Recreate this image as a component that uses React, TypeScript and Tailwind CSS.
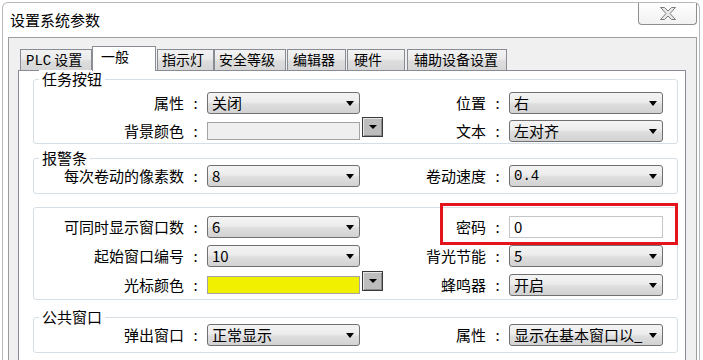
import type { ReactNode } from "react";

const rowGrid = "grid grid-cols-[150px_23px_153px_25px_101px_23px_154px] items-start";

function Dropdown({ value, mono = false }: { value: string; mono?: boolean }) {
  return (
    <div className="flex h-[22px] items-center justify-between rounded-[3px] border border-[#707070] bg-[linear-gradient(180deg,#f4f4f4_0%,#ececec_45%,#dedede_55%,#d2d2d2_100%)] pl-[4px] pr-[5px]">
      <span
        className={
          mono
            ? "whitespace-nowrap font-['Liberation_Mono',monospace] text-[14px] leading-[20px]"
            : "whitespace-nowrap text-[15px] leading-[20px]"
        }
      >
        {value}
      </span>
      <span className="h-0 w-0 border-x-[4px] border-t-[5px] border-x-transparent border-t-black" />
    </div>
  );
}

function TextBox({ value }: { value: string }) {
  return (
    <div className="flex h-[22px] items-center border border-[#c3c5c9] bg-white pl-[4px]">
      <span className="text-[15px] leading-[20px]">{value}</span>
    </div>
  );
}

function ColorBox({ color }: { color: string }) {
  return <div className={"mt-[2px] h-[18px] border border-[#a3a3a3] " + color} />;
}

function ColorButton() {
  return (
    <div className="-mt-[3px] ml-[2px] flex h-[20px] w-[21px] items-center justify-center border border-[#3a3a3a] bg-[#bdbdbd] shadow-[inset_1px_1px_0_#e6e6e6,inset_-1px_-1px_0_#8a8a8a]">
      <span className="h-0 w-0 border-x-[4px] border-t-[4px] border-x-transparent border-t-black" />
    </div>
  );
}

interface RowProps {
  label: string;
  field: ReactNode;
  extra?: ReactNode;
  label2?: string;
  field2?: ReactNode;
}

function Row({ label, field, extra, label2, field2 }: RowProps) {
  return (
    <div className={rowGrid + " h-[22px]"}>
      <span className="text-right text-[15px] leading-[22px]">{label}</span>
      <span className="text-center text-[15px] leading-[22px]">:</span>
      {field}
      <div className="flex">{extra}</div>
      <span className="text-right text-[15px] leading-[22px]">{label2}</span>
      <span className="text-center text-[15px] leading-[22px]">{label2 ? ":" : ""}</span>
      {field2 ?? <div />}
    </div>
  );
}

function Group({
  title,
  className,
  children,
}: {
  title?: string;
  className: string;
  children: ReactNode;
}) {
  return (
    <div className={"relative ml-[14px] mr-[7px] rounded-[3px] border border-[#d5dfe5] " + className}>
      {title ? (
        <span className="absolute -top-[10px] left-[5px] bg-white px-[3px] text-[15px] leading-[18px]">
          {title}
        </span>
      ) : null}
      {children}
    </div>
  );
}

const tabs = [
  { id: "plc", label: "设置", w: "w-[72px]", pl: "pl-[5px]", ml: "" },
  { id: "general", label: "一般", w: "w-[64px]", pl: "pl-[8px]", ml: "" },
  { id: "lamp", label: "指示灯", w: "w-[57px]", pl: "pl-[4px]", ml: "ml-[1px]" },
  { id: "security", label: "安全等级", w: "w-[72px]", pl: "pl-[4px]", ml: "" },
  { id: "editor", label: "编辑器", w: "w-[59px]", pl: "pl-[5px]", ml: "ml-[1px]" },
  { id: "hardware", label: "硬件", w: "w-[58px]", pl: "pl-[6px]", ml: "ml-[1px]" },
  { id: "aux", label: "辅助设备设置", w: "w-[100px]", pl: "pl-[6px]", ml: "ml-[2px]" },
];

function TabStrip() {
  return (
    <div className="flex items-end pl-[11px] pt-[8px]">
      {tabs.map((tab) =>
        tab.id === "general" ? (
          <div
            key={tab.id}
            className={
              "relative z-10 -mb-px h-[25px] border-x border-t border-[#898c95] bg-white text-[14px] leading-[19px] " +
              tab.w +
              " " +
              tab.pl
            }
          >
            {tab.label}
          </div>
        ) : (
          <div
            key={tab.id}
            className={
              "h-[21px] whitespace-nowrap border-x border-t border-[#898c95] bg-[linear-gradient(180deg,#f2f2f2_0%,#ebebeb_45%,#dddddd_55%,#d6d6d6_100%)] text-[14px] leading-[19px] " +
              tab.w +
              " " +
              tab.pl +
              " " +
              tab.ml
            }
          >
            {tab.id === "plc" ? (
              <>
                <span className="font-['Liberation_Mono',monospace]">PLC</span> {tab.label}
              </>
            ) : (
              tab.label
            )}
          </div>
        ),
      )}
    </div>
  );
}

function CloseButton() {
  return (
    <div className="mr-[2px] flex h-[22px] w-[59px] items-center justify-center rounded-b-[4px] border-x border-b border-[#8e8e8e] bg-[linear-gradient(180deg,#ffffff_0%,#f1f1f1_100%)]">
      <svg width="16" height="13" viewBox="0 0 16 13" aria-hidden="true">
        <polygon
          points="0.5,0.5 4.5,0.5 8,4 11.5,0.5 15.5,0.5 10,6.5 15.5,12.5 11.5,12.5 8,9 4.5,12.5 0.5,12.5 6,6.5"
          fill="#e9e9e9"
          stroke="#7a7a7a"
          strokeWidth="1"
          strokeLinejoin="round"
        />
      </svg>
    </div>
  );
}

export default function App() {
  return (
    <div className="h-[360px] w-[703px] overflow-hidden bg-white font-['Noto_Sans_CJK_SC',sans-serif] text-black">
      <div className="ml-[2px] mr-[3px] mt-[2px] rounded-t-[6px] border-x border-t border-[#b8b8b8] bg-white">
        <div className="flex h-[34px] items-start justify-between">
          <div className="pl-[7px] pt-[7px] text-[15px] leading-[20px]">设置系统参数</div>
          <CloseButton />
        </div>

        <div className="ml-[5px] mr-[2px] border-x border-t border-[#9d9d9d] bg-[#f0f0f0] pb-[20px]">
          <TabStrip />

          <div className="ml-[9px] mr-[10px] border border-[#898c95] bg-white pb-[20px] pt-[8px]">
            <Group title="任务按钮" className="flex flex-col gap-[6px] pb-[1px] pt-[12px]">
              <Row
                label="属性"
                field={<Dropdown value="关闭" />}
                label2="位置"
                field2={<Dropdown value="右" />}
              />
              <Row
                label="背景颜色"
                field={<ColorBox color="bg-[#efefef]" />}
                extra={<ColorButton />}
                label2="文本"
                field2={<Dropdown value="左对齐" />}
              />
            </Group>

            <Group title="报警条" className="mt-[14px] pb-[6px] pt-[6px]">
              <Row
                label="每次卷动的像素数"
                field={<Dropdown value="8" />}
                label2="卷动速度"
                field2={<Dropdown value="0.4" mono />}
              />
            </Group>

            <Group className="mt-[13px] flex flex-col gap-[7px] pb-[3px] pt-[8px]">
              <Row
                label="可同时显示窗口数"
                field={<Dropdown value="6" />}
                label2="密码"
                field2={<TextBox value="0" />}
              />
              <Row
                label="起始窗口编号"
                field={<Dropdown value="10" />}
                label2="背光节能"
                field2={<Dropdown value="5" />}
              />
              <Row
                label="光标颜色"
                field={<ColorBox color="bg-[#f0f000]" />}
                extra={<ColorButton />}
                label2="蜂鸣器"
                field2={<Dropdown value="开启" />}
              />
              <div className="pointer-events-none absolute -top-[5px] left-[406px] h-[42px] w-[238px] border-[3px] border-[#e3141c]" />
            </Group>

            <Group title="公共窗口" className="mt-[17px] pb-[6px] pt-[6px]">
              <Row
                label="弹出窗口"
                field={<Dropdown value="正常显示" />}
                label2="属性"
                field2={<Dropdown value="显示在基本窗口以_" />}
              />
            </Group>
          </div>
        </div>
      </div>
    </div>
  );
}
